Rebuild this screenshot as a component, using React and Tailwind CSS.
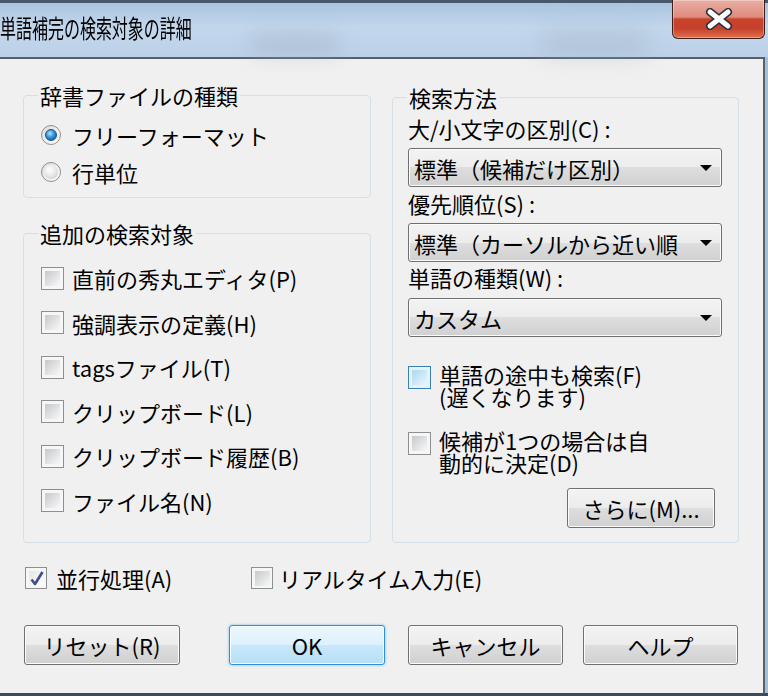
function Radio({ checked }) {
  return (
    <span className="flex h-[20px] w-[20px] shrink-0 items-center justify-center rounded-full border border-[#8e8f8f] bg-[linear-gradient(135deg,#dcdcdc,#ffffff)]">
      {checked ? (
        <span className="h-[12px] w-[12px] rounded-full border border-[#1b4f84] bg-[radial-gradient(circle_at_40%_35%,#b6e6ff_0%,#2f92e0_45%,#0c4c92_100%)]" />
      ) : (
        <span className="h-[14px] w-[14px] rounded-full bg-[radial-gradient(circle_at_40%_35%,#ffffff_0%,#e4e4e4_55%,#bdbdbd_100%)]" />
      )}
    </span>
  );
}

function Check({ checked, hover, small }) {
  const size = small ? "h-[22px] w-[22px]" : "h-[23px] w-[23px]";
  const outer = hover ? "border-[#3c7fb1] bg-[#e3f3fc]" : "border-[#8e8f8f] bg-[#f6f6f6]";
  const inner = checked
    ? "bg-[linear-gradient(135deg,#e6e6e6,#ffffff)]"
    : hover
      ? "bg-[linear-gradient(135deg,#a9d7f3,#e9f6fd)]"
      : "bg-[linear-gradient(135deg,#c6c8cc,#f8f8f8)]";
  return (
    <span className={`relative flex shrink-0 items-center justify-center border ${size} ${outer}`}>
      <span className={`h-[15px] w-[15px] ${inner}`} />
      {checked && (
        <svg className="absolute left-[3px] top-[2px]" width="16" height="17" viewBox="0 0 16 17">
          <path d="M2.5 9.5 L6 14 L13.5 2" fill="none" stroke="#3b4f8c" strokeWidth="2.6" strokeLinejoin="round" />
        </svg>
      )}
    </span>
  );
}

function Combo({ text, className = "" }) {
  return (
    <div className={`flex h-[39px] w-[314px] items-center rounded-[3px] border border-[#707070] bg-[linear-gradient(#f3f3f3_0%,#ececec_50%,#dedede_50%,#d0d0d0_100%)] pl-[5px] pr-[9px] shadow-[inset_0_0_0_1px_#fbfbfb] ${className}`}>
      <span className="min-w-0 flex-1 overflow-hidden whitespace-nowrap leading-[34px]">{text}</span>
      <span className="ml-[4px] h-0 w-0 border-x-[6.5px] border-t-[6px] border-x-transparent border-t-black" />
    </div>
  );
}

function Btn({ children, primary, className = "" }) {
  const look = primary
    ? "border-[#2f8fd8] bg-[linear-gradient(#ecf7fd_0%,#def1fc_50%,#c8e8fb_50%,#b7dff6_100%)] shadow-[inset_0_0_0_1px_#ffffff,0_0_3px_#6fbdf0]"
    : "border-[#707070] bg-[linear-gradient(#f3f3f3_0%,#ececec_50%,#dedede_50%,#d0d0d0_100%)] shadow-[inset_0_0_0_1px_#fbfbfb]";
  return (
    <div className={`flex h-[40px] shrink-0 items-center justify-center rounded-[3px] border ${look} ${className}`}>
      {children}
    </div>
  );
}

// win7 style group box; padding goes on the inner wrapper so the legend stays put
function Group({ title, className = "", bodyClass = "", children }) {
  return (
    <fieldset className={`rounded-[4px] border border-[#d5dfe5] ${className}`}>
      <legend className="ml-[14px] px-[2px] leading-[24px]">{title}</legend>
      <div className={bodyClass}>{children}</div>
    </fieldset>
  );
}

function CheckRow({ label }) {
  return (
    <div className="flex h-[24px] items-center gap-[8px]">
      <Check />
      <span className="whitespace-nowrap">{label}</span>
    </div>
  );
}

export default function App() {
  const extras = [
    "直前の秀丸エディタ(P)",
    "強調表示の定義(H)",
    "tagsファイル(T)",
    "クリップボード(L)",
    "クリップボード履歴(B)",
    "ファイル名(N)",
  ];

  return (
    <div className="flex h-[696px] w-[768px] flex-col overflow-hidden bg-[#a9bfd6] font-['Noto_Sans_CJK_JP','Noto_Sans',sans-serif] text-[22px] leading-[24px] text-black">
      {/* title bar */}
      <div className="relative flex h-[57px] shrink-0 items-start border-t-[3px] border-[#46586c] bg-[linear-gradient(180deg,#a9c4e0_0%,#c3d7ec_45%,#bcd1e8_100%)]">
        <div className="pointer-events-none absolute left-[250px] top-[30px] h-[22px] w-[90px] rounded-full bg-[#9aaabb] opacity-40 blur-[10px]" />
        <div className="pointer-events-none absolute left-[540px] top-[28px] h-[24px] w-[110px] rounded-full bg-[#9aaabb] opacity-40 blur-[12px]" />
        <span className="relative mt-[12px] inline-block origin-left scale-x-[0.94] scale-y-[1.5] whitespace-nowrap text-[17px] leading-[24px] text-black">
          単語補完の検索対象の詳細
        </span>
        <div className="relative -mt-[3px] ml-auto mr-[3px] flex h-[39px] w-[93px] items-center justify-center rounded-b-[6px] border border-t-0 border-[#3f1d18] bg-[linear-gradient(180deg,#e9aea4_0%,#de8b7c_45%,#c9432c_50%,#c5412b_75%,#e0704f_100%)] shadow-[inset_0_0_0_1px_rgba(255,255,255,0.35)]">
          <svg width="32" height="22" viewBox="0 0 32 22">
            <path d="M7 4 L25 18 M25 4 L7 18" stroke="#27323d" strokeWidth="8" strokeLinecap="round" />
            <path d="M7 4 L25 18 M25 4 L7 18" stroke="#ffffff" strokeWidth="5" strokeLinecap="round" />
          </svg>
        </div>
      </div>

      {/* client area */}
      <div className="h-[636px] w-[765px] shrink-0 border-r-2 border-t-2 border-[#56606c] bg-[#f0f0f0]">
        <div className="flex items-start">
          <div className="ml-[23px] mt-[24px] flex w-[348px] flex-col">
            <Group title="辞書ファイルの種類" bodyClass="pb-[13px] pl-[17px] pt-[16px]">
              <div className="flex flex-col gap-[13px]">
                <div className="flex h-[24px] items-center gap-[11px]">
                  <Radio checked />
                  <span>フリーフォーマット</span>
                </div>
                <div className="flex h-[24px] items-center gap-[11px]">
                  <Radio />
                  <span>行単位</span>
                </div>
              </div>
            </Group>
            <Group title="追加の検索対象" className="mt-[23px]" bodyClass="pb-[29px] pl-[17px] pt-[21px]">
              <div className="flex flex-col gap-[20.6px]">
                {extras.map((label) => (
                  <CheckRow key={label} label={label} />
                ))}
              </div>
            </Group>
          </div>

          <div className="ml-[21px] mt-[26px] w-[347px]">
            <Group title="検索方法" bodyClass="flex flex-col pb-[14px] pl-[15px] pt-[7px]">
              <div className="h-[24px] whitespace-nowrap">大/小文字の区別(C) :</div>
              <Combo text="標準（候補だけ区別）" className="mt-[8px]" />
              <div className="mt-[4px] h-[24px] whitespace-nowrap">優先順位(S) :</div>
              <Combo text="標準（カーソルから近い順" className="mt-[8px]" />
              <div className="mt-[3px] h-[24px] whitespace-nowrap">単語の種類(W) :</div>
              <Combo text="カスタム" className="mt-[9px]" />

              <div className="mt-[26px] flex items-start gap-[8px]">
                <span className="mt-[3px]">
                  <Check hover />
                </span>
                <span className="leading-[22px]">
                  単語の途中も検索(F)
                  <br />
                  (遅くなります)
                </span>
              </div>
              <div className="mt-[22px] flex items-start gap-[8px]">
                <span className="mt-[3px]">
                  <Check />
                </span>
                <span className="leading-[22px]">
                  候補が1つの場合は自
                  <br />
                  動的に決定(D)
                </span>
              </div>
              <Btn className="ml-auto mr-[23px] mt-[15px] w-[148px]">さらに(M)...</Btn>
            </Group>
          </div>
        </div>

        <div className="mt-[23px] flex h-[24px] items-center">
          <div className="ml-[25px] flex w-[226px] items-center gap-[9px]">
            <Check checked small />
            <span className="whitespace-nowrap">並行処理(A)</span>
          </div>
          <div className="flex items-center gap-[6px]">
            <Check small />
            <span className="whitespace-nowrap">リアルタイム入力(E)</span>
          </div>
        </div>

        <div className="mt-[35px] flex">
          <Btn className="ml-[24px] w-[156px]">リセット(R)</Btn>
          <Btn primary className="ml-[49px] w-[156px]">OK</Btn>
          <Btn className="ml-[23px] w-[155px]">キャンセル</Btn>
          <Btn className="ml-[20px] w-[155px]">ヘルプ</Btn>
        </div>
      </div>

      <div className="h-[3px] shrink-0 bg-[#3c4a5c]" />
    </div>
  );
}
